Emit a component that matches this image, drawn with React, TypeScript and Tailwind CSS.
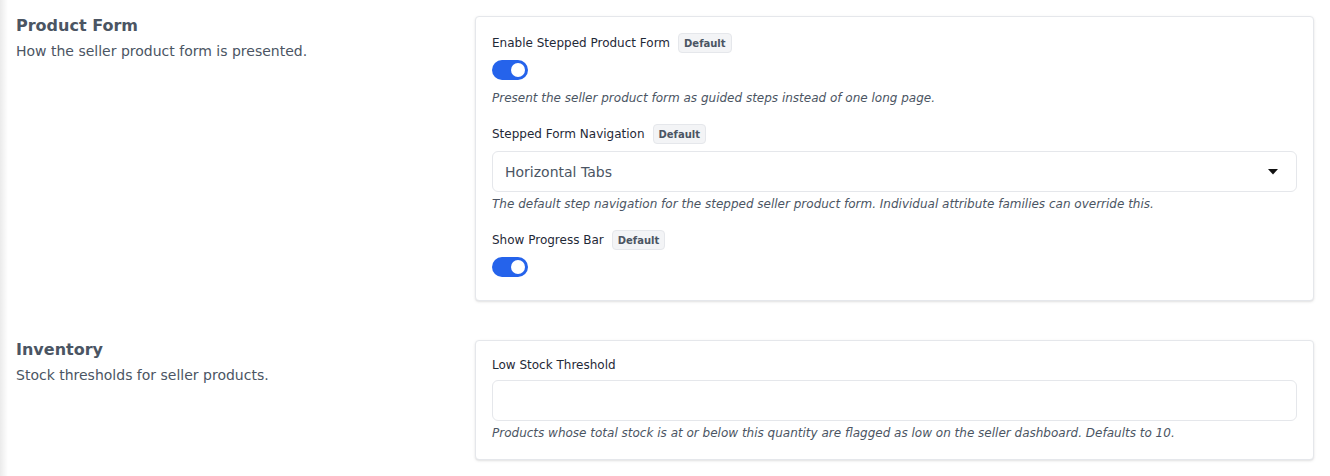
import React from "react";

const font = { fontFamily: '"DejaVu Sans", "Noto Sans", sans-serif' };

function Badge() {
  return (
    <span className="ml-2 inline-flex h-5 items-center rounded border border-[#e5e7eb] bg-[#f3f4f6] px-[5px] text-[10px] font-bold text-[#4b5563]">
      Default
    </span>
  );
}

function Toggle() {
  return (
    <div className="flex h-5 w-9 items-center justify-end rounded-full bg-[#2563eb] pr-[3px]">
      <div className="h-[14px] w-[14px] rounded-full bg-white" />
    </div>
  );
}

function Help({ children }: { children: React.ReactNode }) {
  return <p className="text-[12px] italic leading-4 text-[#4b5563]">{children}</p>;
}

function LabelRow({ text, badge = true }: { text: string; badge?: boolean }) {
  return (
    <div className="flex h-5 items-center text-[12px] text-[#1f2937]">
      <span>{text}</span>
      {badge && <Badge />}
    </div>
  );
}

function Section({
  title,
  desc,
  children,
}: {
  title: string;
  desc: string;
  children: React.ReactNode;
}) {
  return (
    <div className="grid grid-cols-[443px_1fr] gap-4">
      <div>
        <h2 className="text-base font-bold leading-5 text-[#4b5563]">{title}</h2>
        <p className="mt-[5px] text-sm leading-5 text-[#4b5563]">{desc}</p>
      </div>
      <div className="rounded border border-[#e5e7eb] bg-white shadow-sm">{children}</div>
    </div>
  );
}

export default function App() {
  return (
    <div className="relative min-h-[476px] bg-white" style={font}>
      <div className="pointer-events-none absolute left-0 top-0 h-full w-2 bg-gradient-to-r from-[#ebebeb] to-white" />
      <div className="flex flex-col gap-[39px] px-4 pt-4">
        <Section title="Product Form" desc="How the seller product form is presented.">
          <div className="px-4 pb-[23px] pt-4">
            <LabelRow text="Enable Stepped Product Form" />
            <div className="mt-[7px]">
              <Toggle />
            </div>
            <div className="mt-[10px]">
              <Help>Present the seller product form as guided steps instead of one long page.</Help>
            </div>
            <div className="mt-[18px]">
              <LabelRow text="Stepped Form Navigation" />
            </div>
            <div className="mt-[7px] flex h-[41px] items-center justify-between rounded-md border border-[#e5e7eb] bg-white pl-3 pr-[18px]">
              <span className="text-sm text-[#4b5563]">Horizontal Tabs</span>
              <svg width="10" height="6" viewBox="0 0 10 6">
                <path d="M0 0 L10 0 L5 5.5 Z" fill="#111" />
              </svg>
            </div>
            <div className="mt-1">
              <Help>
                The default step navigation for the stepped seller product form. Individual attribute
                families can override this.
              </Help>
            </div>
            <div className="mt-[18px]">
              <LabelRow text="Show Progress Bar" />
            </div>
            <div className="mt-[7px]">
              <Toggle />
            </div>
          </div>
        </Section>
        <Section title="Inventory" desc="Stock thresholds for seller products.">
          <div className="px-4 pb-[18px] pt-[17px]">
            <div className="text-[12px] leading-[14px] text-[#1f2937]">Low Stock Threshold</div>
            <div className="mt-[8px] h-[41px] rounded-md border border-[#e5e7eb] bg-white" />
            <div className="mt-1">
              <Help>
                Products whose total stock is at or below this quantity are flagged as low on the seller
                dashboard. Defaults to 10.
              </Help>
            </div>
          </div>
        </Section>
      </div>
    </div>
  );
}
